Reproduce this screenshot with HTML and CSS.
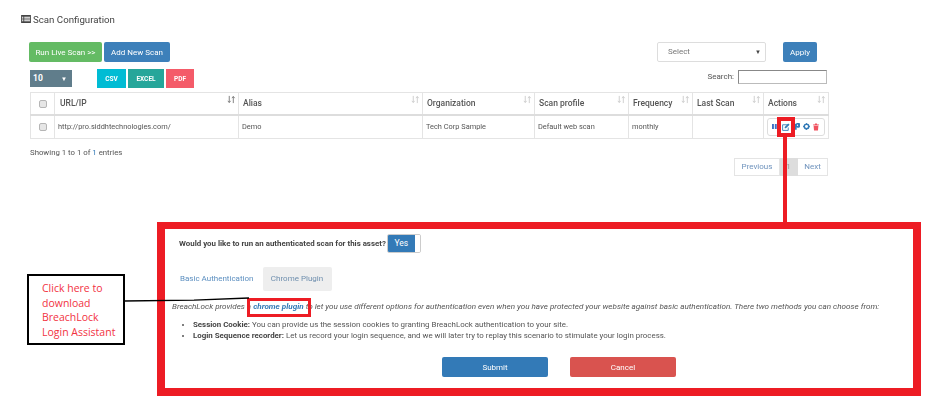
FILE: index.html
```html
<!DOCTYPE html>
<html lang="en">
<head>
<meta charset="utf-8">
<title>Scan Configuration</title>
<link rel="stylesheet" href="styles.css">
</head>
<body>
<svg class="defs" width="0" height="0" aria-hidden="true">
  <symbol id="sort" viewBox="0 0 10 10">
    <path d="M2.500 1v7M1 6.500l1.500 2 1.500-2M7 9V2M5.500 3.500L7 1.500l1.500 2" fill="none" stroke="currentColor" stroke-width="1"/>
  </symbol>
</svg>
<main class="page">
  <h1 class="title">
    <svg class="title-icon" viewBox="0 0 11 9"><path fill="#444" d="M0 0h11v9H0z"/><path fill="#fff" d="M1 2h1.500v1H1zM3.500 2H10v1H3.500zM1 4h1.500v1H1zM3.500 4H10v1H3.500zM1 6h1.500v1H1zM3.500 6H10v1H3.500z"/></svg>
    Scan Configuration
  </h1>
  <section class="content">
    <div class="toolbar">
      <div class="group">
        <button class="btn btn-green run">Run Live Scan &gt;&gt;</button>
        <button class="btn btn-blue add">Add New Scan</button>
      </div>
      <div class="group bulk">
        <div class="select">Select<span class="caret">▼</span></div>
        <button class="btn btn-blue apply">Apply</button>
      </div>
    </div>
    <div class="toolbar second">
      <div class="group">
        <div class="length">10<span class="caret light">▼</span></div>
        <div class="exports">
          <button class="exp csv">CSV</button>
          <button class="exp excel">EXCEL</button>
          <button class="exp pdf">PDF</button>
        </div>
      </div>
      <label class="search">Search:<span class="search-input"></span></label>
    </div>
    <table class="grid">
      <colgroup>
        <col class="c1"><col class="c2"><col class="c3"><col class="c4"><col class="c5"><col class="c6"><col class="c7"><col class="c8">
      </colgroup>
      <thead>
        <tr>
          <th class="center"><input type="checkbox" class="check"></th>
          <th>URL/IP<svg class="sort dark"><use href="#sort"/></svg></th>
          <th>Alias<svg class="sort"><use href="#sort"/></svg></th>
          <th>Organization<svg class="sort"><use href="#sort"/></svg></th>
          <th>Scan profile<svg class="sort"><use href="#sort"/></svg></th>
          <th>Frequency<svg class="sort"><use href="#sort"/></svg></th>
          <th>Last Scan<svg class="sort"><use href="#sort"/></svg></th>
          <th>Actions<svg class="sort"><use href="#sort"/></svg></th>
        </tr>
      </thead>
      <tbody>
        <tr>
          <td class="center"><input type="checkbox" class="check"></td>
          <td>http://pro.siddhtechnologies.com/</td>
          <td>Demo</td>
          <td>Tech Corp Sample</td>
          <td>Default web scan</td>
          <td>monthly</td>
          <td></td>
          <td class="actions-cell">
            <div class="actions">
              <svg viewBox="0 0 6 8" class="a-pause"><path fill="#3f6fc4" d="M0 1h2.300v6H0zM3.400 1h2.300v6H3.400z"/></svg>
              <svg viewBox="0 0 9 9" class="a-edit"><path fill="none" stroke="#337ab7" d="M6.500 2H.7v6.300H7V5"/><path fill="#337ab7" d="M3 4.500L7 .5l1.500 1.500-4 4H3z"/></svg>
              <svg viewBox="0 0 6 8" class="a-key"><path fill="#337ab7" d="M2 0a3 3 0 1 1 0 5v3H0V1z"/><circle cx="3" cy="2.500" r=".8" fill="#fff"/></svg>
              <svg viewBox="0 0 8 8" class="a-gear"><circle cx="4" cy="4" r="2.600" fill="none" stroke="#337ab7" stroke-width="1.800"/><path stroke="#337ab7" d="M4 0v1.500M4 6.500V8M0 4h1.500M6.500 4H8"/></svg>
              <svg viewBox="0 0 7 8" class="a-trash"><path fill="#f0525f" d="M0 1h2l.5-1h2l.5 1h2v1H0zM.7 2.500h5.600L5.800 8H1.200z"/></svg>
            </div>
          </td>
        </tr>
      </tbody>
    </table>
    <p class="info">Showing 1 to 1 of <a>1</a> entries</p>
    <nav class="pager">
      <a class="pg prev">Previous</a><a class="pg current">1</a><a class="pg next">Next</a>
    </nav>
  </section>

  <section class="callout">
    <div class="auth-row">
      <strong>Would you like to run an authenticated scan for this asset?</strong>
      <span class="toggle"><span class="toggle-on">Yes</span><span class="toggle-knob"></span></span>
    </div>
    <div class="tabs">
      <a class="tab">Basic Authentication</a>
      <a class="tab tab-active">Chrome Plugin</a>
    </div>
    <p class="lead">BreachLock provides a <a class="plugin">chrome plugin</a> to let you use different options for authentication even when you have protected your website against basic authentication. There two methods you can choose from:</p>
    <ul class="methods">
      <li><b>Session Cookie:</b> You can provide us the session cookies to granting BreachLock authentication to your site.</li>
      <li><b>Login Sequence recorder:</b> Let us record your login sequence, and we will later try to replay this scenario to stimulate your login process.</li>
    </ul>
    <div class="form-actions">
      <button class="btn-wide btn-blue">Submit</button>
      <button class="btn-wide btn-red">Cancel</button>
    </div>
  </section>

  <div class="mark mark-edit"></div>
  <div class="mark-line"></div>
  <div class="mark mark-plugin"></div>
  <div class="note">Click here to download BreachLock Login Assistant</div>
  <svg class="note-line" viewBox="0 0 127 5"><path d="M0 4L70 3.200 125 1" stroke="#000" stroke-width="1.300" fill="none"/></svg>
</main>
</body>
</html>
```

FILE: styles.css
```css
* { box-sizing: border-box; }
html, body { margin: 0; padding: 0; background: #fff; }
body { font-family: Roboto, "Liberation Sans", sans-serif; color: #555; overflow: hidden; }
.defs { position: absolute; }
.page { position: relative; width: 939px; height: 414px; overflow: hidden; filter: blur(0.3px); }

.title { display: flex; align-items: center; gap: 2px; margin: 0; padding: 13px 0 0 21px; height: 25px; font-size: 9.700px; font-weight: 400; color: #444; }
.title-icon { width: 10px; height: 8px; }

.content { margin-left: 29px; width: 799px; }
.toolbar { display: flex; justify-content: space-between; margin-top: 17px; height: 20px; }
.toolbar.second { margin-top: 7px; height: 19px; }
.group { display: flex; align-items: center; gap: 2px; }
.bulk { margin-right: 11px; gap: 17px; }

.btn { height: 20px; padding: 0; border: 1px solid transparent; border-radius: 2px; color: #fff; font: 400 8px Roboto, sans-serif; opacity: .95; }
.btn-green { background: #5cb85c; }
.btn-blue { background: #337ab7; color: #fff; }
.btn-red { background: #d9534f; color: #fff; }
.run { width: 73px; }
.add { width: 66px; }
.apply { width: 34px; }

.select { position: relative; width: 109px; height: 20px; padding-left: 10px; border: 1px solid #ddd; border-radius: 2px; font-size: 8px; line-height: 18px; color: #777; }
.caret { position: absolute; right: 4px; top: 0; font-size: 6px; color: #444; }
.length { position: relative; width: 42px; height: 17px; margin-left: 1px; padding-left: 3px; background: #607d8b; color: #fff; font-size: 8.500px; font-weight: 700; line-height: 17px; }
.caret.light { color: #fff; right: 5px; }
.exports { display: flex; gap: 2px; margin-left: 23px; }
.exp { height: 19px; padding: 0; border: 0; color: #fff; font: 700 6.500px Roboto, sans-serif; }
.csv { width: 29px; background: #00bcd4; }
.excel { width: 36px; background: #26a69a; }
.pdf { width: 28px; background: #f45b69; }

.search { display: flex; align-items: flex-start; gap: 4px; font-size: 8px; line-height: 14px; padding-top: 1px; }
.search-input { width: 89px; height: 14px; margin-right: 1px; border: 1px solid #bbb; border-top-color: #888; border-left-color: #888; background: #fff; }

.grid { width: 798px; margin: 4px 0 0 1px; border-collapse: collapse; table-layout: fixed; }
.c1 { width: 24px; } .c2 { width: 184px; } .c3 { width: 184px; } .c4 { width: 112px; }
.c5 { width: 94px; } .c6 { width: 64px; } .c7 { width: 71px; } .c8 { width: 65px; }
.grid th, .grid td { position: relative; border: 1px solid #e4e4e4; text-align: left; }
.grid th { height: 22px; padding: 0 5px; font-size: 8.500px; font-weight: 500; color: #555; border-bottom: 2px solid #ddd; }
.grid td { height: 24px; padding: 0 3px; font-size: 7.400px; color: #555; }
.grid .center { text-align: center; padding: 0; }
.grid th:nth-child(n+3) { padding-left: 4px; }
.sort { position: absolute; right: 2px; top: 2px; width: 9px; height: 9px; color: #ccc; }
.sort.dark { color: #777; }
.check { appearance: none; width: 8px; height: 8px; margin: 0; vertical-align: middle; background: #e6e6e6; border: 1px solid #b5b5b5; border-radius: 2px; }
.grid .actions-cell { padding: 0 3px; }
.actions { position: relative; display: flex; align-items: center; height: 18px; padding-left: 4px; border: 1px solid #ddd; border-radius: 3px; }
.actions svg { flex: none; }
.a-pause { width: 5px; height: 7px; margin-right: 5px; }
.a-edit { width: 8px; height: 8px; margin-right: 5px; }
.a-key { width: 5px; height: 7px; margin-right: 3px; }
.a-gear { width: 7px; height: 7px; margin-right: 3px; }
.a-trash { width: 6px; height: 8px; }

.info { margin: 8px 0 0 1px; height: 11px; font-size: 7.800px; line-height: 11px; color: #555; }
.info a { color: #337ab7; }
.pager { display: flex; justify-content: flex-end; height: 18px; }
.pg { height: 18px; border: 1px solid #e4e4e4; border-left-width: 0; font-size: 8px; line-height: 16px; text-align: center; color: #6f93bd; }
.prev { width: 46px; border-left-width: 1px; }
.current { width: 18px; background: #ddd; border-color: #ddd; color: #999; }
.next { width: 30px; }

.callout { width: 764px; height: 174px; margin: 46px 0 0 157px; border: 8px solid #ed1c24; border-width: 7px 8px 8px; padding: 0; font-size: 8px; }
.auth-row { display: flex; align-items: center; gap: 1px; height: 19px; margin: 5px 0 0 14px; }
.auth-row strong { font-size: 7.900px; font-weight: 700; color: #444; }
.toggle { display: flex; width: 34px; height: 19px; border: 1px solid #ccc; border-radius: 2px; overflow: hidden; }
.toggle-on { width: 27px; background: #337ab7; color: #fff; font-size: 8.500px; line-height: 17px; text-align: center; }
.toggle-knob { flex: 1; background: #fff; }
.tabs { display: flex; gap: 9px; margin: 14px 0 0 15px; height: 24px; }
.tab { padding-top: 0; font-size: 8px; line-height: 24px; color: #5c8fc0; }
.tab-active { width: 69px; background: #eee; text-align: center; color: #6f8fae; border-radius: 2px; }
.lead { margin: 9px 0 0 7px; font-size: 8.100px; line-height: 12px; font-style: italic; color: #555; white-space: nowrap; }
.plugin { font-weight: 700; color: #337ab7; }
.methods { margin: 7px 0 0; padding: 0 0 0 28px; font-size: 7.900px; line-height: 11px; color: #555; }
.methods b { font-weight: 700; color: #444; }
.form-actions { display: flex; gap: 22px; margin: 16px 0 0; padding-left: 277px; }
.btn-wide { width: 106px; height: 20px; padding: 0; border: 0; border-radius: 2px; font: 400 8px Roboto, sans-serif; }

.mark { position: absolute; border: 4px solid #ed1c24; }
.mark-edit { left: 777px; top: 117px; width: 18px; height: 20px; }
.mark-line { position: absolute; left: 783px; top: 137px; width: 4px; height: 85px; background: #ed1c24; }
.mark-plugin { left: 247px; top: 298px; width: 64px; height: 19px; border-width: 3px; }
.note { position: absolute; left: 27px; top: 274px; width: 98px; height: 71px; padding: 5px 1px 0 13px; border: 2px solid #000; background: #fff; font: 400 10.500px/14.500px "Open Sans", "Noto Sans", sans-serif; color: #f2323f; }
.note-line { position: absolute; left: 124px; top: 297px; width: 127px; height: 5px; }
```
